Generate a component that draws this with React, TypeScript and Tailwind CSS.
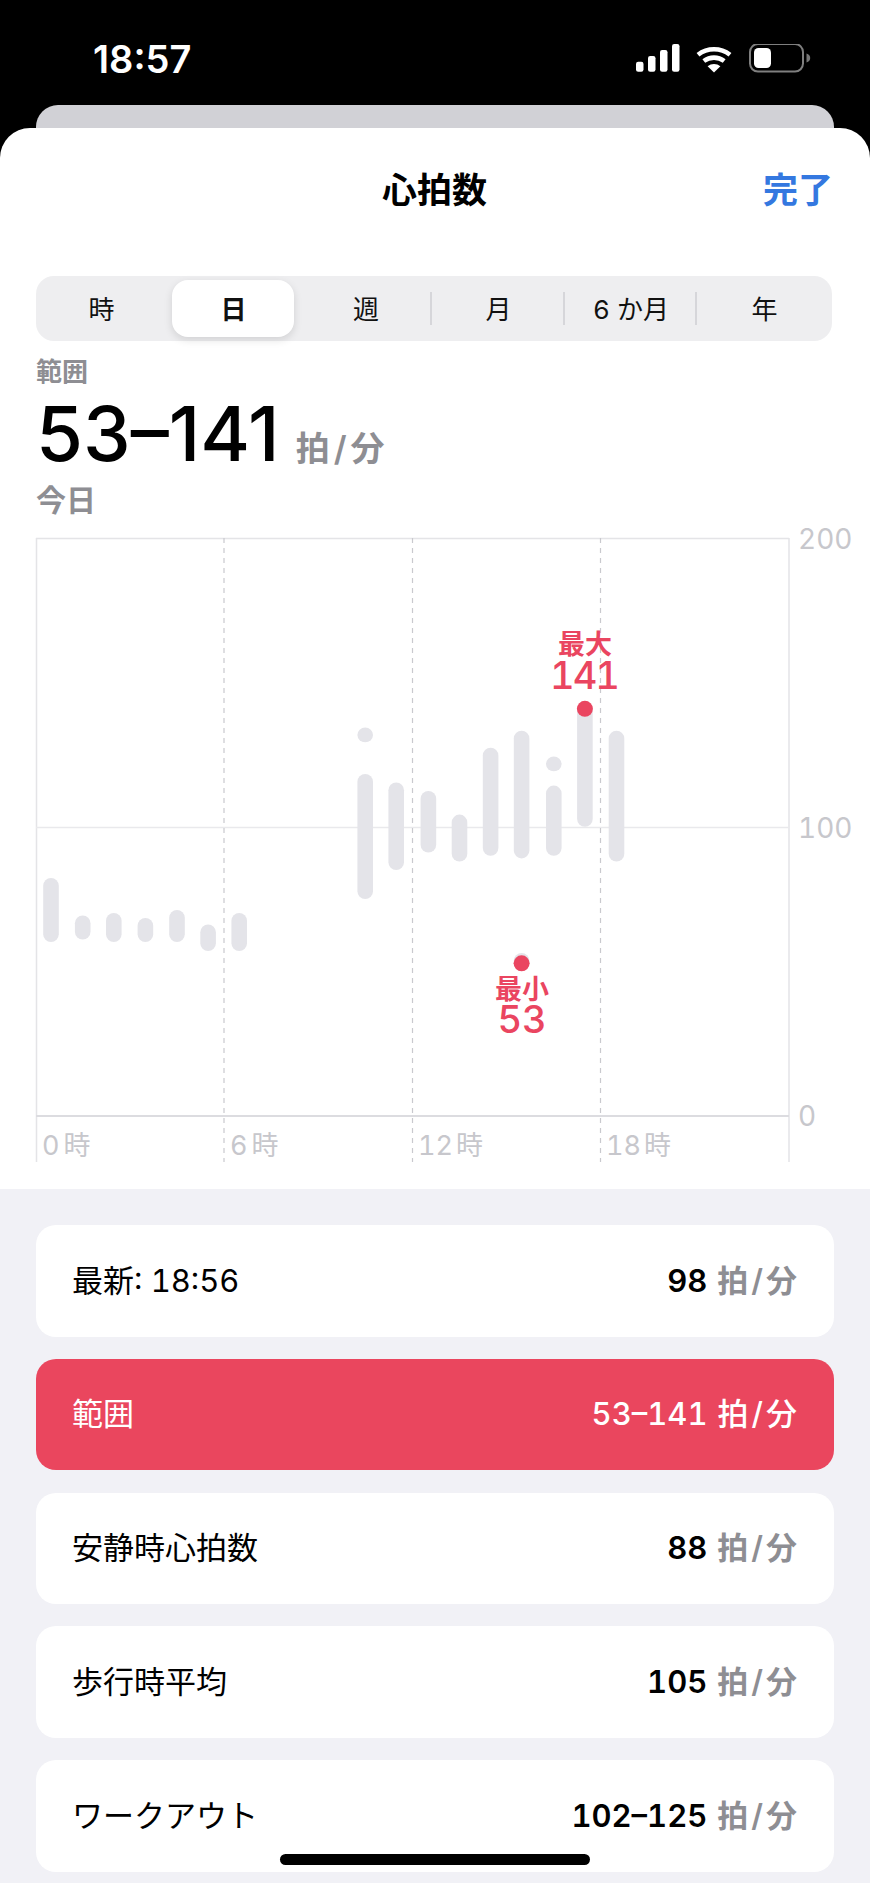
import React from "react";

const bars: [number, number, number][] = [
  [51, 878, 942], [82.7, 915.5, 939.6], [113.8, 913, 942], [145.4, 918, 942], [177, 910, 942],
  [208.1, 924.5, 951], [239.2, 913, 951], [365.2, 727.6, 742.3], [365.2, 774, 899], [396.2, 782.5, 870],
  [428.4, 791, 852.6], [459.5, 814.6, 861.5], [490.6, 747.7, 855.7], [521.6, 730.7, 858.4],
  [553.8, 756.6, 771.3], [553.8, 785.6, 855.7], [584.9, 702, 826.7], [616.5, 730.7, 861.5], [521.6, 953, 971],
];

const rows = [
  { label: "最新: 18:56", value: "98" },
  { label: "範囲", value: "53–141", active: true },
  { label: "安静時心拍数", value: "88" },
  { label: "歩行時平均", value: "105" },
  { label: "ワークアウト", value: "102–125" },
];

const segments = [
  { t: "時", w: "w-[131px]" },
  { t: "日", w: "w-[133px]", selected: true },
  { t: "週", w: "w-[132px]", sep: true },
  { t: "月", w: "w-[133px]", sep: true },
  { t: "6 か月", w: "w-[132px]", sep: true },
  { t: "年", w: "w-[135px]" },
];

function StatusIcons() {
  return (
    <svg width="180" height="32" viewBox="0 0 180 32" className="block">
      <g fill="#fff">
        <rect x="4" y="17.7" width="7.5" height="10" rx="2.2" />
        <rect x="16" y="12" width="7.5" height="15.7" rx="2.2" />
        <rect x="28" y="6" width="7.5" height="21.7" rx="2.2" />
        <rect x="40" y="0" width="7.5" height="27.7" rx="2.2" />
      </g>
      <g fill="none" stroke="#fff" strokeWidth="4.6">
        <path d="M66 10.8a26 26 0 0 1 32 0" />
        <path d="M71.8 17a17 17 0 0 1 20.4 0" />
      </g>
      <path d="M75.6 22.3a10.5 10.5 0 0 1 12.8 0L82 28.4z" fill="#fff" />
      <rect x="118" y="0" width="53" height="27.6" rx="8" fill="none" stroke="#7f7f7f" strokeWidth="2" />
      <rect x="122" y="4" width="17" height="20" rx="4.5" fill="#fff" />
      <path d="M174.5 9.5c2.5.8 3.7 2.4 3.7 4.5s-1.2 3.7-3.7 4.5z" fill="#777" />
    </svg>
  );
}

function ChartDrawing() {
  return (
    <svg width="870" height="652" viewBox="0 537 870 652" className="absolute inset-0">
      <g stroke="#e4e4e7" strokeWidth="1.5" fill="none">
        <path d="M36.5 538V1162M789 538V1162M36 538.5H789" />
        <path d="M36 827.6H789" stroke="#e9e9ec" />
        <path d="M36 1116H789" stroke="#dcdce0" strokeWidth="2" />
      </g>
      <g stroke="#c9c9ce" strokeWidth="1.2" strokeDasharray="5 5" fill="none">
        <path d="M224 538V1162M412.5 538V1162M600.5 538V1162" />
      </g>
      <g fill="#e4e4e9">
        {bars.map(([x, a, b], i) => (
          <rect key={i} x={x - 7.8} y={a} width="15.6" height={b - a} rx="7.8" />
        ))}
      </g>
      <circle cx="584.9" cy="708.8" r="8" fill="#ea4560" />
      <circle cx="521.6" cy="963.3" r="8" fill="#ea4560" />
    </svg>
  );
}

export default function App() {
  return (
    <div className="relative w-[870px] h-[1883px] overflow-hidden bg-black flex flex-col tabular-nums font-['Inter','Noto_Sans_CJK_JP',sans-serif]">
      <div className="h-[105px] shrink-0 flex items-start justify-between pl-[93px] pr-[58px]">
        <span className="mt-[37px] text-[38px] leading-[44px] font-semibold text-white proportional-nums">18:57</span>
        <div className="mt-[44px]"><StatusIcons /></div>
      </div>
      <div className="mx-[36px] h-[23px] shrink-0 rounded-t-[22px] bg-[#d1d1d6]" />
      <div className="flex-1 rounded-t-[30px] bg-white flex flex-col -mt-[0.5px]">
        <div className="h-[125px] shrink-0 grid grid-cols-3 items-center pl-[36px] pr-[37px]">
          <span />
          <span className="text-center text-[35px] font-semibold text-black leading-none">心拍数</span>
          <span className="text-right text-[35px] font-semibold text-[#3478e0] leading-none">完了</span>
        </div>
        <div className="mt-[23.5px] mx-[36px] w-[796px] h-[65px] shrink-0 rounded-[18px] bg-[#eeeef0] flex">
          {segments.map((s) => (
            <div key={s.t} className={`relative flex items-center justify-center ${s.w}`}>
              {s.selected && (
                <div className="absolute left-[4.5px] right-[6.5px] top-[4px] bottom-[4px] rounded-[16px] bg-white shadow-[0_3px_8px_rgba(0,0,0,0.12)]" />
              )}
              <span className={`relative mt-[2px] text-[26px] leading-none text-[#111] ${s.selected ? "font-semibold" : "font-normal"}`}>{s.t}</span>
              {s.sep && <span className="absolute right-0 top-[16px] h-[33px] w-[2px] bg-[#d6d6da]" />}
            </div>
          ))}
        </div>
        <div className="mt-[16px] ml-[36px] h-[30px] text-[26px] leading-[30px] font-semibold text-[#8e8e93]">範囲</div>
        <div className="ml-[36px] h-[88px] flex items-baseline">
          <span className="text-[76px] leading-[92px] font-medium text-black proportional-nums">53–141</span>
          <span className="ml-[16px] text-[34px] font-semibold text-[#8e8e93]">拍<span className="mx-[4px]">/</span>分</span>
        </div>
        <div className="mt-[10px] ml-[36px] h-[30px] text-[30px] leading-[30px] font-semibold text-[#8e8e93]">今日</div>
        <div className="relative mt-[22px] h-[652px] shrink-0">
          <ChartDrawing />
          <span className="absolute left-[798px] top-[-14px] text-[28px] leading-[32px] text-[#c7c7cc]">200</span>
          <span className="absolute left-[798px] top-[275px] text-[28px] leading-[32px] text-[#c7c7cc]">100</span>
          <span className="absolute left-[798px] top-[563px] text-[28px] leading-[32px] text-[#c7c7cc]">0</span>
          <span className="absolute left-[42px] top-[593px] text-[27px] leading-[32px] text-[#c7c7cc]">0<span className="ml-[4px]">時</span></span>
          <span className="absolute left-[230px] top-[593px] text-[27px] leading-[32px] text-[#c7c7cc]">6<span className="ml-[4px]">時</span></span>
          <span className="absolute left-[418px] top-[593px] text-[27px] leading-[32px] text-[#c7c7cc]">12<span className="ml-[3px]">時</span></span>
          <span className="absolute left-[606px] top-[593px] text-[27px] leading-[32px] text-[#c7c7cc]">18<span className="ml-[3px]">時</span></span>
          <span className="absolute left-[535px] w-[100px] text-center top-[95px] text-[27px] leading-[26px] font-semibold text-[#ea4560]">最大</span>
          <span className="absolute left-[534px] w-[100px] text-center top-[120px] text-[38px] leading-[36px] tracking-[-2px] font-medium text-[#ea4560]">141</span>
          <span className="absolute left-[472px] w-[100px] text-center top-[440px] text-[27px] leading-[26px] font-semibold text-[#ea4560]">最小</span>
          <span className="absolute left-[472px] w-[100px] text-center top-[464px] text-[38px] leading-[36px] font-medium text-[#ea4560]">53</span>
        </div>
        <div className="flex-1 bg-[#f1f1f6] pt-[36px] px-[36px] flex flex-col gap-[22.3px]">
          {rows.map((r) => (
            <div key={r.label} className={`h-[111.5px] shrink-0 w-[798px] rounded-[20px] flex items-center justify-between pl-[36px] pr-[37px] text-[31px] ${r.active ? "bg-[#ea465e] text-white" : "bg-white text-black"}`}>
              <span>{r.label}</span>
              <span className="flex items-baseline gap-[10px]">
                <span className={r.active ? "font-medium" : "font-semibold"}>{r.value}</span>
                <span className={r.active ? "font-medium" : "font-semibold text-[#8e8e93]"}>拍<span className="mx-[3px]">/</span>分</span>
              </span>
            </div>
          ))}
        </div>
      </div>
      <div className="absolute left-[280px] top-[1854px] w-[310px] h-[11px] rounded-[6px] bg-black" />
    </div>
  );
}
